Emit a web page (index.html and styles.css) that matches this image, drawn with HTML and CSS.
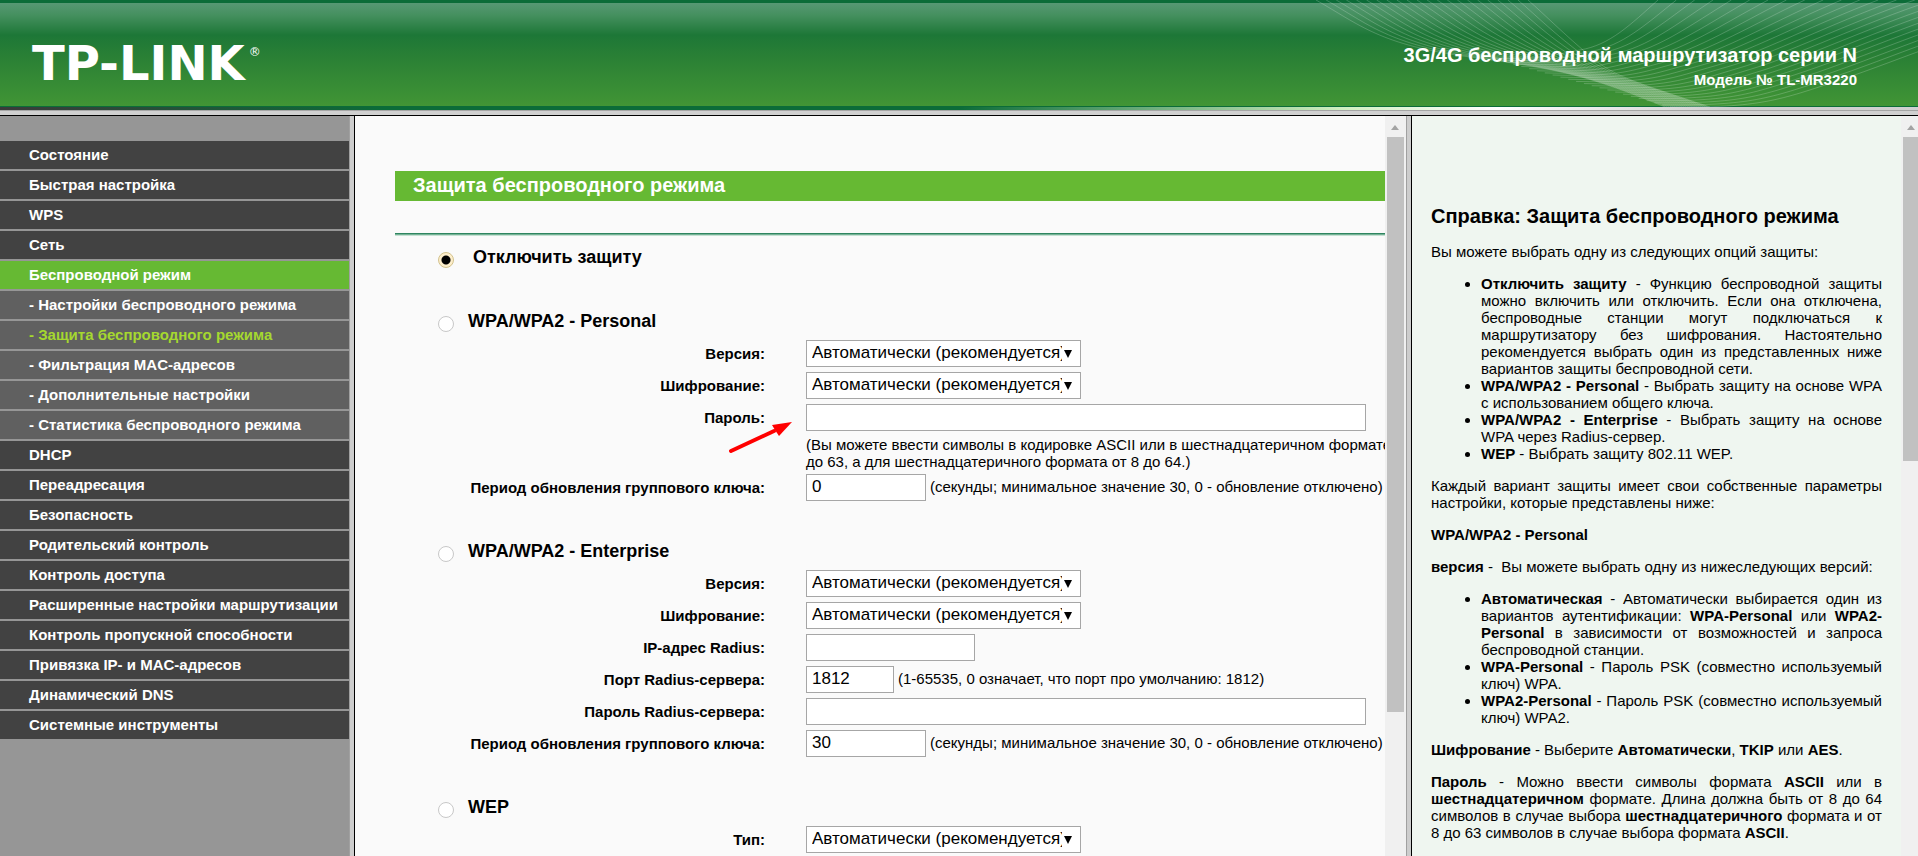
FILE: index.html
```html
<!DOCTYPE html>
<html lang="ru">
<head>
    <meta charset="UTF-8">
    <meta name="viewport" content="width=device-width, initial-scale=1.0">
    <title>TL-MR3220</title>
    <link rel="stylesheet" href="styles.css">
</head>
<body>

    <header class="banner">
        <svg class="waves" id="waves" viewBox="0 0 618 107" width="618" height="107" aria-hidden="true"></svg>
        <div class="logo">TP-LINK<span class="reg">®</span></div>
        <div class="product">
            <div class="product-name">3G/4G беспроводной маршрутизатор серии N</div>
            <div class="product-model">Модель № TL-MR3220</div>
        </div>
    </header>
    <div class="banner-strip"></div>
    <div class="divider-h"></div>

    <div class="frames">
        <!-- Меню -->
        <nav class="menu">
            <a href="#">Состояние</a>
            <a href="#">Быстрая настройка</a>
            <a href="#">WPS</a>
            <a href="#">Сеть</a>
            <a href="#" class="open">Беспроводной режим</a>
            <a href="#" class="sub">- Настройки беспроводного режима</a>
            <a href="#" class="sub current">- Защита беспроводного режима</a>
            <a href="#" class="sub">- Фильтрация MAC-адресов</a>
            <a href="#" class="sub">- Дополнительные настройки</a>
            <a href="#" class="sub">- Статистика беспроводного режима</a>
            <a href="#">DHCP</a>
            <a href="#">Переадресация</a>
            <a href="#">Безопасность</a>
            <a href="#">Родительский контроль</a>
            <a href="#">Контроль доступа</a>
            <a href="#">Расширенные настройки маршрутизации</a>
            <a href="#">Контроль пропускной способности</a>
            <a href="#">Привязка IP- и MAC-адресов</a>
            <a href="#">Динамический DNS</a>
            <a href="#">Системные инструменты</a>
        </nav>
        <div class="divider-v"></div>

        <!-- Настройки -->
        <main class="content">
            <h1>Защита беспроводного режима</h1>
            <div class="line"></div>

            <form>
                <section>
                    <div class="mode first">
                        <input type="radio" name="sec" id="secOff" checked>
                        <label for="secOff">Отключить защиту</label>
                    </div>
                </section>

                <section>
                    <div class="mode">
                        <input type="radio" name="sec" id="secPsk">
                        <label for="secPsk">WPA/WPA2 - Personal</label>
                    </div>
                    <div class="row">
                        <label for="pskVer">Версия:</label>
                        <div class="field">
                            <select id="pskVer"><option>Автоматически (рекомендуется)</option><option>WPA-Personal</option><option>WPA2-Personal</option></select>
                        </div>
                    </div>
                    <div class="row">
                        <label for="pskCipher">Шифрование:</label>
                        <div class="field">
                            <select id="pskCipher"><option>Автоматически (рекомендуется)</option><option>TKIP</option><option>AES</option></select>
                        </div>
                    </div>
                    <div class="row">
                        <label for="pskSecret">Пароль:</label>
                        <div class="field">
                            <input type="text" id="pskSecret" class="w-long">
                            <svg class="pointer" viewBox="0 0 66 34" width="66" height="34" aria-hidden="true">
                                <path d="M3 30 L46 10" stroke="#ff0000" stroke-width="4" stroke-linecap="round"/>
                                <path d="M64 1 L44 4 L47 9 L51 15 Z" fill="#ff0000"/>
                            </svg>
                        </div>
                    </div>
                    <p class="hint">(Вы можете ввести символы в кодировке ASCII или в шестнадцатеричном формате<br>до 63, а для шестнадцатеричного формата от 8 до 64.)</p>
                    <div class="row">
                        <label for="pskGroup">Период обновления группового ключа:</label>
                        <div class="field">
                            <input type="text" id="pskGroup" class="w-mid" value="0">
                            <span>(секунды; минимальное значение 30, 0 - обновление отключено)</span>
                        </div>
                    </div>
                </section>

                <section>
                    <div class="mode">
                        <input type="radio" name="sec" id="secEnt">
                        <label for="secEnt">WPA/WPA2 - Enterprise</label>
                    </div>
                    <div class="row">
                        <label for="entVer">Версия:</label>
                        <div class="field">
                            <select id="entVer"><option>Автоматически (рекомендуется)</option><option>WPA</option><option>WPA2</option></select>
                        </div>
                    </div>
                    <div class="row">
                        <label for="entCipher">Шифрование:</label>
                        <div class="field">
                            <select id="entCipher"><option>Автоматически (рекомендуется)</option><option>TKIP</option><option>AES</option></select>
                        </div>
                    </div>
                    <div class="row">
                        <label for="radiusIp">IP-адрес Radius:</label>
                        <div class="field"><input type="text" id="radiusIp" class="w-ip"></div>
                    </div>
                    <div class="row">
                        <label for="radiusPort">Порт Radius-сервера:</label>
                        <div class="field">
                            <input type="text" id="radiusPort" class="w-port" value="1812">
                            <span>(1-65535, 0 означает, что порт про умолчанию: 1812)</span>
                        </div>
                    </div>
                    <div class="row">
                        <label for="radiusSecret">Пароль Radius-сервера:</label>
                        <div class="field"><input type="text" id="radiusSecret" class="w-long"></div>
                    </div>
                    <div class="row">
                        <label for="entGroup">Период обновления группового ключа:</label>
                        <div class="field">
                            <input type="text" id="entGroup" class="w-mid" value="30">
                            <span>(секунды; минимальное значение 30, 0 - обновление отключено)</span>
                        </div>
                    </div>
                </section>

                <section>
                    <div class="mode">
                        <input type="radio" name="sec" id="secWep">
                        <label for="secWep">WEP</label>
                    </div>
                    <div class="row">
                        <label for="wepType">Тип:</label>
                        <div class="field">
                            <select id="wepType"><option>Автоматически (рекомендуется)</option></select>
                        </div>
                    </div>
                </section>
            </form>
        </main>
        <div class="scrollbar main-scroll"><div class="thumb"></div></div>
        <div class="divider-v"></div>

        <!-- Справка -->
        <aside class="help">
            <h2>Справка: Защита беспроводного режима</h2>
            <p>Вы можете выбрать одну из следующих опций защиты:</p>
            <ul>
                <li><b>Отключить защиту</b> - Функцию беспроводной защиты можно включить или отключить. Если она отключена, беспроводные станции могут подключаться к маршрутизатору без шифрования. Настоятельно рекомендуется выбрать один из представленных ниже вариантов защиты беспроводной сети.</li>
                <li><b>WPA/WPA2 - Personal</b> - Выбрать защиту на основе WPA с использованием общего ключа.</li>
                <li><b>WPA/WPA2 - Enterprise</b> - Выбрать защиту на основе WPA через Radius-сервер.</li>
                <li><b>WEP</b> - Выбрать защиту 802.11 WEP.</li>
            </ul>
            <p>Каждый вариант защиты имеет свои собственные параметры настройки, которые представлены ниже:</p>
            <p><b>WPA/WPA2 - Personal</b></p>
            <p><b>версия</b> -&nbsp; Вы можете выбрать одну из нижеследующих версий:</p>
            <ul>
                <li><b>Автоматическая</b> - Автоматически выбирается один из вариантов аутентификации: <b>WPA-Personal</b> или <b>WPA2-Personal</b> в зависимости от возможностей и запроса беспроводной станции.</li>
                <li><b>WPA-Personal</b> - Пароль PSK (совместно используемый ключ) WPA.</li>
                <li><b>WPA2-Personal</b> - Пароль PSK (совместно используемый ключ) WPA2.</li>
            </ul>
            <p><b>Шифрование</b> - Выберите <b>Автоматически</b>, <b>TKIP</b> или <b>AES</b>.</p>
            <p><b>Пароль</b> - Можно ввести символы формата <b>ASCII</b> или в <b>шестнадцатеричном</b> формате. Длина должна быть от 8 до 64 символов в случае выбора <b>шестнадцатеричного</b> формата и от 8 до 63 символов в случае выбора формата <b>ASCII</b>.</p>
        </aside>
        <div class="scrollbar help-scroll"><div class="thumb"></div></div>
    </div>

    <script>
        // Волны в шапке: линии между двумя крайними кривыми
        function drawWave(from, to, count) {
            const svg = document.getElementById('waves');
            for (let i = 0; i < count; i++) {
                const t = i / (count - 1);
                const p = from.map((v, k) => v + (to[k] - v) * t);
                const path = document.createElementNS('http://www.w3.org/2000/svg', 'path');
                path.setAttribute('d', `M${p[0]} ${p[1]} C${p[2]} ${p[3]} ${p[4]} ${p[5]} ${p[6]} ${p[7]} S${p[8]} ${p[9]} ${p[10]} ${p[11]}`);
                svg.appendChild(path);
            }
        }

        drawWave(
            [16, 0, 60, 25, 80, 45, 170, 57, 290, 76, 365, 107],
            [228, 0, 245, 15, 265, 35, 290, 56, 330, 80, 410, 107], 22
        );
        drawWave(
            [358, 0, 330, 25, 310, 45, 280, 50, 250, 60, 190, 58],
            [780, 0, 680, 25, 600, 60, 540, 80, 460, 108, 370, 107], 24
        );
    </script>
</body>
</html>
```
FILE: styles.css
```css
* {
    box-sizing: border-box;
}

body {
    margin: 0;
    height: 100vh;
    display: flex;
    flex-direction: column;
    overflow: hidden;
    font-family: Arial, "Liberation Sans", sans-serif;
    font-size: 15px;
    line-height: 17px;
    color: #000;
}

/* Шапка */
.banner {
    position: relative;
    flex: none;
    height: 107px;
    display: flex;
    justify-content: space-between;
    align-items: flex-start;
    padding: 0 61px 0 32px;
    border-top: 3px solid #0b6c38;
    border-bottom: 1px solid #0b6c38;
    background: linear-gradient(#579874 0, #45905f 12px, #1d7737 32px, #2a8035 54px, #419535 103px);
    color: #fff;
    font-weight: bold;
}

.waves {
    position: absolute;
    top: -3px;
    right: 0;
    fill: none;
    stroke: #fff;
    stroke-opacity: 0.2;
}

.logo {
    position: relative;
    display: flex;
    gap: 4px;
    padding-top: 33px;
    font-family: "DejaVu Sans", sans-serif;
    font-size: 48px;
    line-height: 54px;
}

.reg {
    font-size: 12px;
    line-height: 32px;
    font-weight: normal;
}

.product {
    position: relative;
    padding-top: 40px;
    text-align: right;
}

.product-name {
    font-size: 20px;
    line-height: 24px;
}

.product-model {
    margin-top: 4px;
    line-height: 18px;
}

.banner-strip {
    flex: none;
    height: 3px;
    background: linear-gradient(to right, #3a3a3a 0, #0b6c38 20%, #0b6c38 50%, #d0efc0 70%, #fff 78%, #d0d0d0 90%);
}

.divider-h {
    flex: none;
    height: 6px;
    border-top: 1px solid #a5a5a5;
    border-bottom: 1px solid #000;
    background: #d0d0d0;
}

.frames {
    flex: 1;
    min-height: 0;
    display: flex;
}

.divider-v {
    flex: none;
    width: 6px;
    border-left: 1px solid #a0a0a0;
    border-right: 1px solid #000;
    background: #cdcdcd;
}

/* Меню */
.menu {
    flex: none;
    width: 349px;
    padding-top: 25px;
    background: #969696;
    overflow: hidden;
}

.menu a {
    display: block;
    height: 28px;
    margin-bottom: 2px;
    padding-left: 29px;
    line-height: 28px;
    font-weight: bold;
    color: #fff;
    background: #424242;
    text-decoration: none;
    white-space: nowrap;
}

.menu .open {
    background: #66b933;
}

.menu .sub {
    background: #606060;
}

.menu .current {
    color: #a5d82f;
}

/* Настройки */
.content {
    flex: 1;
    min-width: 0;
    padding: 55px 0 0 40px;
    background: #fafafa;
    overflow: hidden;
}

h1 {
    margin: 0;
    padding: 0 0 2px 18px;
    font-size: 20px;
    line-height: 28px;
    color: #fff;
    background: #66b933;
}

.line {
    height: 3px;
    margin: 32px 0 8px;
    border-top: 1px solid #2f8560;
    border-bottom: 1px solid #c5e0d2;
    background: #74b295;
}

section {
    padding-bottom: 32px;
}

.mode {
    display: flex;
    align-items: center;
    gap: 14px;
    height: 32px;
    padding-left: 43px;
    font-size: 18px;
    font-weight: bold;
}

.mode.first {
    gap: 19px;
}

.mode label {
    padding-bottom: 6px;
    line-height: 20px;
}

input[type="radio"] {
    appearance: none;
    width: 16px;
    height: 16px;
    margin: 0;
    border: 1px solid #c8c8c8;
    border-radius: 50%;
    background: #fff;
}

input[type="radio"]:checked {
    border-color: #d3c28c;
    background: radial-gradient(#000 0 4px, #fdeecb 5px);
}

.row {
    display: grid;
    grid-template-columns: 370px 1fr;
    column-gap: 41px;
    align-items: center;
    height: 27px;
    margin-bottom: 5px;
}

.row label {
    font-weight: bold;
    text-align: right;
}

.field {
    position: relative;
    display: flex;
    align-items: center;
    gap: 4px;
    white-space: nowrap;
}

.field span {
    padding-bottom: 2px;
}

.field input,
.field select {
    flex: none;
    height: 27px;
    margin: 0;
    padding: 0 5px 2px;
    border: 1px solid #a6a6a6;
    border-radius: 0;
    background: #fff;
    font-family: inherit;
    font-size: 17px;
    color: #000;
}

.field select {
    appearance: none;
    width: 275px;
    padding-right: 18px;
    background: #fff url("data:image/svg+xml,%3Csvg xmlns='http://www.w3.org/2000/svg' width='8' height='8'%3E%3Cpath d='M0 0h8L4 8z'/%3E%3C/svg%3E") no-repeat right 8px center;
}

.w-long {
    width: 560px;
}

.w-ip {
    width: 169px;
}

.w-mid {
    width: 120px;
}

.w-port {
    width: 88px;
}

.hint {
    margin: 0 0 4px 411px;
    white-space: nowrap;
}

/* Стрелка к полю пароля */
.pointer {
    position: absolute;
    top: 17px;
    left: -78px;
    fill: none;
}

/* Полосы прокрутки */
.scrollbar {
    flex: none;
    position: relative;
    padding: 21px 2px 0;
    background: #f0f0f0;
}

.scrollbar::before {
    content: "";
    position: absolute;
    top: 9px;
    left: 6px;
    border: 4px solid transparent;
    border-top: 0;
    border-bottom: 5px solid #a3a3a3;
}

.main-scroll {
    width: 21px;
}

.help-scroll {
    width: 17px;
    padding-right: 0;
}

.thumb {
    background: #c1c1c1;
}

.main-scroll .thumb {
    height: 80%;
}

.help-scroll .thumb {
    height: 45%;
}

/* Справка */
.help {
    flex: none;
    width: 489px;
    padding: 88px 19px 0;
    background: #eff6f0;
    text-align: justify;
    overflow: hidden;
}

.help h2 {
    margin: 0 0 15px;
    font-size: 20px;
    line-height: 24px;
}

.help p {
    margin: 15px 0;
}

.help ul {
    margin: 15px 0;
    padding-left: 50px;
}
```
